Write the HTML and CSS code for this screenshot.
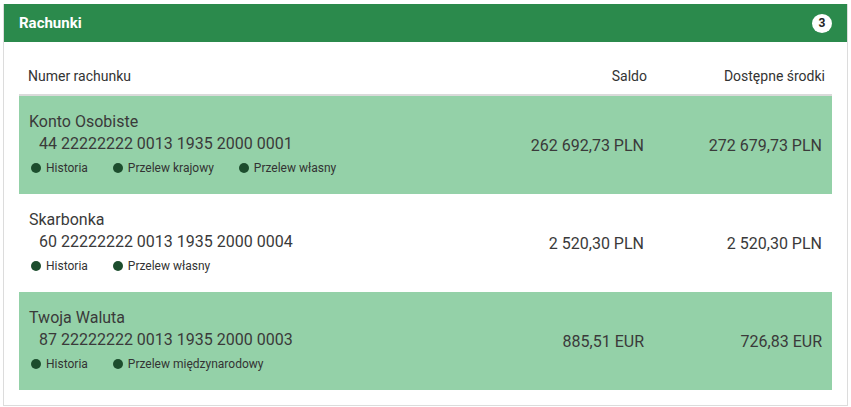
FILE: index.html
```html
<!DOCTYPE html>
<html lang="pl">
<head>
  <meta charset="UTF-8" />
  <title>Rachunki</title>
  <link rel="stylesheet" href="styles.css">
</head>
<body>

  <div class="panel">
    <div class="panel-head">
      <h2>Rachunki</h2>
      <span class="badge">3</span>
    </div>

    <div class="panel-body">
      <table class="accounts">
        <thead>
          <tr>
            <th>Numer rachunku</th>
            <th class="num col-saldo">Saldo</th>
            <th class="num col-avail">Dostępne środki</th>
          </tr>
        </thead>
        <tbody>
          <tr class="hl">
            <td>
              <div class="acc-name">Konto Osobiste</div>
              <div class="acc-no">44 22222222 0013 1935 2000 0001</div>
              <div class="links">
                <a href="#">Historia</a>
                <a href="#">Przelew krajowy</a>
                <a href="#">Przelew własny</a>
              </div>
            </td>
            <td class="num">262 692,73 PLN</td>
            <td class="num">272 679,73 PLN</td>
          </tr>
          <tr>
            <td>
              <div class="acc-name">Skarbonka</div>
              <div class="acc-no">60 22222222 0013 1935 2000 0004</div>
              <div class="links">
                <a href="#">Historia</a>
                <a href="#">Przelew własny</a>
              </div>
            </td>
            <td class="num">2 520,30 PLN</td>
            <td class="num">2 520,30 PLN</td>
          </tr>
          <tr class="hl">
            <td>
              <div class="acc-name">Twoja Waluta</div>
              <div class="acc-no">87 22222222 0013 1935 2000 0003</div>
              <div class="links">
                <a href="#">Historia</a>
                <a href="#">Przelew międzynarodowy</a>
              </div>
            </td>
            <td class="num">885,51 EUR</td>
            <td class="num">726,83 EUR</td>
          </tr>
        </tbody>
      </table>
    </div>
  </div>

</body>
</html>
```

FILE: styles.css
```css
* {
  box-sizing: border-box;
  margin: 0;
  padding: 0;
}

body {
  font-family: Roboto, 'Liberation Sans', sans-serif;
  background: #fff;
  color: #3a3a3a;
  padding: 4px 3px;
}

.panel {
  width: 845px;
  border: 1px solid #dcdcdc;
  border-top: none;
  background: #fff;
}

.panel-head {
  background: #2b8a4c;
  height: 38px;
  display: flex;
  align-items: center;
  justify-content: space-between;
  padding: 0 15px;
}

.panel-head h2 {
  color: #fff;
  font-size: 15px;
  font-weight: 700;
}

.badge {
  width: 20px;
  height: 19px;
  border-radius: 50%;
  background: #fff;
  color: #222;
  font-size: 12px;
  font-weight: 700;
  display: flex;
  align-items: center;
  justify-content: center;
}

.panel-body {
  padding: 13px 15px 15px;
}

.accounts {
  width: 100%;
  border-collapse: collapse;
}

.accounts th {
  height: 40px;
  font-size: 14px;
  font-weight: 400;
  color: #333;
  text-align: left;
  padding: 2px 7px 0 9px;
  border-bottom: 2px solid #dadada;
}

.accounts .num {
  text-align: right;
}

.col-saldo {
  width: 220px;
}

.col-avail {
  width: 178px;
}

.accounts td {
  height: 97px;
  padding: 15px 10px 15px;
  vertical-align: top;
}

.accounts td.num {
  vertical-align: middle;
  font-size: 16px;
  padding-bottom: 14px;
}

.accounts tr.hl td {
  background: #94d1a8;
}

.acc-name {
  font-size: 16px;
  line-height: 22px;
}

.acc-no {
  font-size: 16px;
  line-height: 22px;
  padding-left: 10px;
}

.links {
  display: flex;
  gap: 25px;
  line-height: 22px;
  margin-top: 2px;
  padding-left: 2px;
}

.links a {
  font-size: 12px;
  color: #333;
  text-decoration: none;
  display: flex;
  align-items: center;
  gap: 5px;
}

.links a::before {
  content: '';
  width: 10px;
  height: 10px;
  border-radius: 50%;
  background: #1c4d2d;
}
```
